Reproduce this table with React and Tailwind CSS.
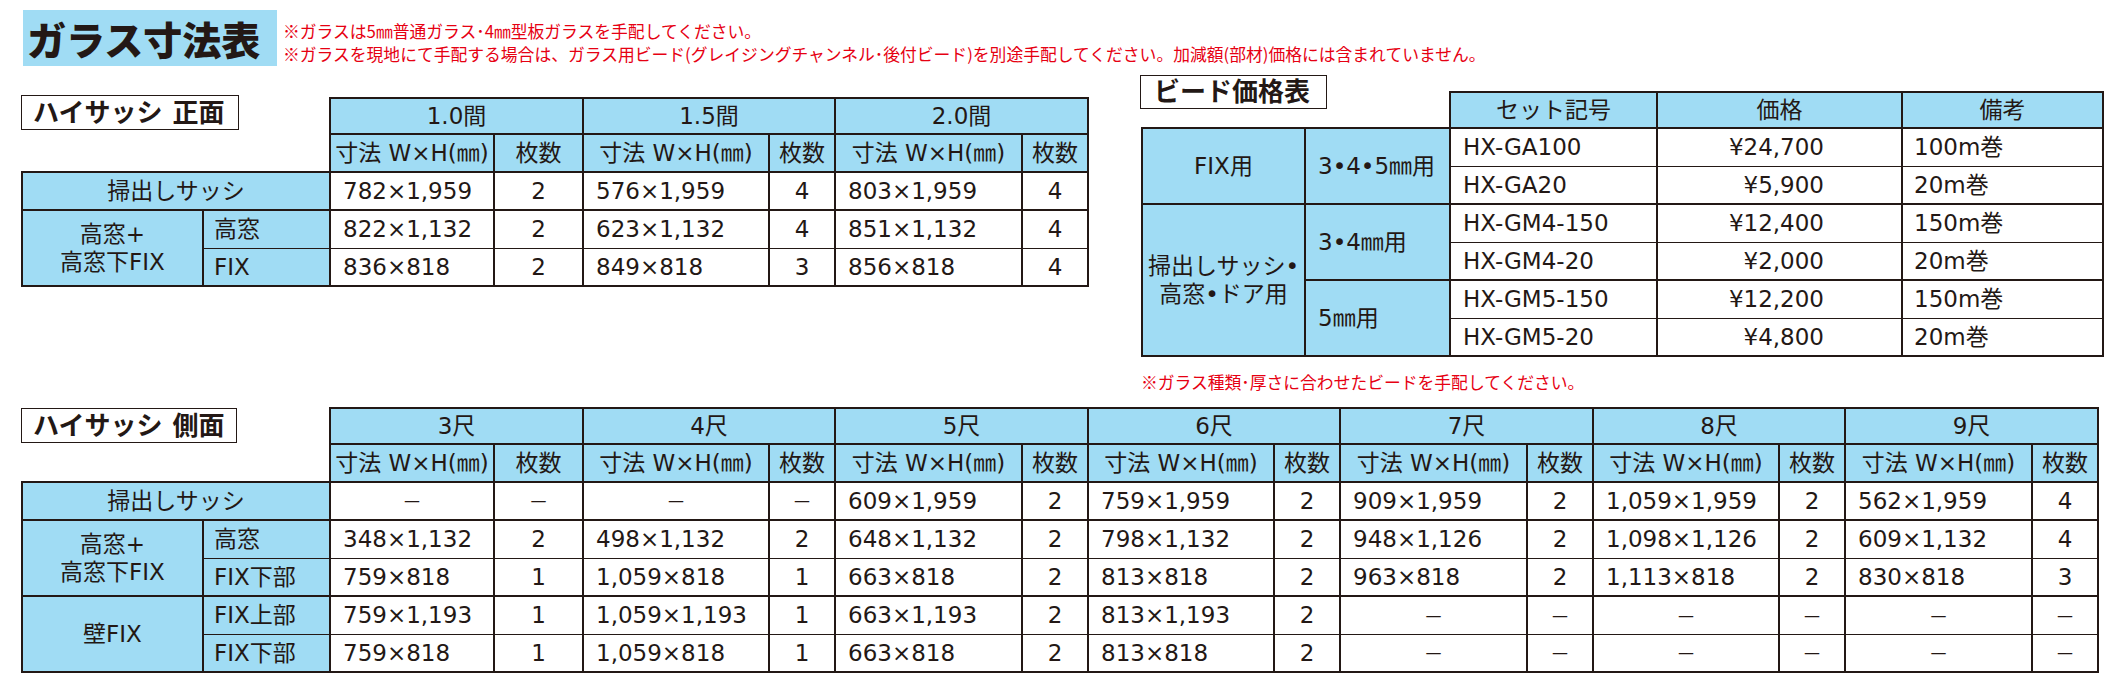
import React from 'react'

const ink = 'border-[#231815]'
const blue = 'bg-[#a0dcf4]'

function Cell({ children, className = '' }) {
  return (
    <div className={`flex items-center border-r-2 ${ink} ${className}`}>
      {children}
    </div>
  )
}

function Label({ children, className = '' }) {
  return (
    <div className={`flex items-center gap-[10px] border ${ink} bg-white text-[26px] font-bold leading-none ${className}`}>
      {children}
    </div>
  )
}

const Dash = () => <span className="text-[16px]">—</span>

// one data row of the size tables: [dim, count] pairs
function DataCells({ pairs, thin }) {
  const b = thin ? 'border-b' : 'border-b-2'
  return pairs.map(([dim, count], i) => (
    <React.Fragment key={i}>
      {dim === '-' ? (
        <Cell className={`${b} justify-center`}><Dash /></Cell>
      ) : (
        <Cell className={`${b} pl-[12px]`}>{dim}</Cell>
      )}
      <Cell className={`${b} justify-center`}>{count === '-' ? <Dash /> : count}</Cell>
    </React.Fragment>
  ))
}

function SizeHeader({ groups }) {
  return (
    <>
      {groups.map((g) => (
        <Cell key={g} className={`col-span-2 border-t-2 border-b-2 justify-center ${blue}`}>{g}</Cell>
      ))}
      {groups.map((g) => (
        <React.Fragment key={g + 'sub'}>
          <Cell className={`border-b-2 justify-center ${blue}`}>寸法 W×H(㎜)</Cell>
          <Cell className={`border-b-2 justify-center ${blue}`}>枚数</Cell>
        </React.Fragment>
      ))}
    </>
  )
}

const front = {
  groups: ['1.0間', '1.5間', '2.0間'],
  rows: [
    [['782×1,959', '2'], ['576×1,959', '4'], ['803×1,959', '4']],
    [['822×1,132', '2'], ['623×1,132', '4'], ['851×1,132', '4']],
    [['836×818', '2'], ['849×818', '3'], ['856×818', '4']],
  ],
}

const side = {
  groups: ['3尺', '4尺', '5尺', '6尺', '7尺', '8尺', '9尺'],
  rows: [
    [['-', '-'], ['-', '-'], ['609×1,959', '2'], ['759×1,959', '2'], ['909×1,959', '2'], ['1,059×1,959', '2'], ['562×1,959', '4']],
    [['348×1,132', '2'], ['498×1,132', '2'], ['648×1,132', '2'], ['798×1,132', '2'], ['948×1,126', '2'], ['1,098×1,126', '2'], ['609×1,132', '4']],
    [['759×818', '1'], ['1,059×818', '1'], ['663×818', '2'], ['813×818', '2'], ['963×818', '2'], ['1,113×818', '2'], ['830×818', '3']],
    [['759×1,193', '1'], ['1,059×1,193', '1'], ['663×1,193', '2'], ['813×1,193', '2'], ['-', '-'], ['-', '-'], ['-', '-']],
    [['759×818', '1'], ['1,059×818', '1'], ['663×818', '2'], ['813×818', '2'], ['-', '-'], ['-', '-'], ['-', '-']],
  ],
}

const beads = [
  ['HX-GA100', '¥24,700', '100m巻'],
  ['HX-GA20', '¥5,900', '20m巻'],
  ['HX-GM4-150', '¥12,400', '150m巻'],
  ['HX-GM4-20', '¥2,000', '20m巻'],
  ['HX-GM5-150', '¥12,200', '150m巻'],
  ['HX-GM5-20', '¥4,800', '20m巻'],
]

function FrontTable() {
  const { groups, rows } = front
  return (
    <div className="grid grid-cols-[183px_127px_164px_89px_186px_66px_187px_66px] grid-rows-[repeat(5,38px)]">
      <div className={`col-span-2 row-span-2 flex items-start border-r-2 border-b-2 ${ink}`}>
        <Label className="-mt-[2px] h-[35px] w-[218px] pl-[11px]">
          <span>ハイサッシ</span><span>正面</span>
        </Label>
      </div>
      <SizeHeader groups={groups} />

      <Cell className={`col-span-2 border-l-2 border-b-2 justify-center ${blue}`}>掃出しサッシ</Cell>
      <DataCells pairs={rows[0]} />

      <Cell className={`row-span-2 border-l-2 border-b-2 justify-center text-center leading-[28px] ${blue}`}>
        高窓+<br />高窓下FIX
      </Cell>
      <Cell className={`border-b pl-[10px] ${blue}`}>高窓</Cell>
      <DataCells pairs={rows[1]} thin />
      <Cell className={`border-b-2 pl-[10px] ${blue}`}>FIX</Cell>
      <DataCells pairs={rows[2]} />
    </div>
  )
}

function SideTable() {
  const { groups, rows } = side
  return (
    <div className="grid grid-cols-[183px_127px_164px_89px_186px_66px_187px_66px_186px_66px_187px_66px_186px_66px_187px_66px] grid-rows-[repeat(7,38px)]">
      <div className={`col-span-2 row-span-2 flex items-start border-r-2 border-b-2 ${ink}`}>
        <Label className="mt-[1px] h-[35px] w-[216px] pl-[11px]">
          <span>ハイサッシ</span><span>側面</span>
        </Label>
      </div>
      <SizeHeader groups={groups} />

      <Cell className={`col-span-2 border-l-2 border-b-2 justify-center ${blue}`}>掃出しサッシ</Cell>
      <DataCells pairs={rows[0]} />

      <Cell className={`row-span-2 border-l-2 border-b-2 justify-center text-center leading-[28px] ${blue}`}>
        高窓+<br />高窓下FIX
      </Cell>
      <Cell className={`border-b pl-[10px] ${blue}`}>高窓</Cell>
      <DataCells pairs={rows[1]} thin />
      <Cell className={`border-b-2 pl-[10px] ${blue}`}>FIX下部</Cell>
      <DataCells pairs={rows[2]} />

      <Cell className={`row-span-2 border-l-2 border-b-2 justify-center ${blue}`}>壁FIX</Cell>
      <Cell className={`border-b pl-[10px] ${blue}`}>FIX上部</Cell>
      <DataCells pairs={rows[3]} thin />
      <Cell className={`border-b-2 pl-[10px] ${blue}`}>FIX下部</Cell>
      <DataCells pairs={rows[4]} />
    </div>
  )
}

function BeadRow({ row, last }) {
  const b = last ? 'border-b-2' : 'border-b'
  const [code, price, note] = row
  return (
    <>
      <Cell className={`${b} pl-[12px]`}>{code}</Cell>
      <Cell className={`${b} justify-end pr-[77px]`}>{price}</Cell>
      <Cell className={`${b} pl-[11px]`}>{note}</Cell>
    </>
  )
}

function BeadTable() {
  return (
    <div className="grid grid-cols-[165px_145px_207px_245px_201px] grid-rows-[repeat(7,38px)]">
      <div className={`col-span-2 flex items-start border-r-2 border-b-2 ${ink}`}>
        <Label className="-ml-[1px] -mt-[16px] h-[34px] w-[187px] pl-[13px]">ビード価格表</Label>
      </div>
      <Cell className={`border-t-2 border-b-2 justify-center ${blue}`}>セット記号</Cell>
      <Cell className={`border-t-2 border-b-2 justify-center ${blue}`}>価格</Cell>
      <Cell className={`border-t-2 border-b-2 justify-center ${blue}`}>備考</Cell>

      <Cell className={`row-span-2 border-l-2 border-b-2 justify-center ${blue}`}>FIX用</Cell>
      <Cell className={`row-span-2 border-b-2 pl-[12px] ${blue}`}>3•4•5㎜用</Cell>
      <BeadRow row={beads[0]} />
      <BeadRow row={beads[1]} last />

      <Cell className={`row-span-4 border-l-2 border-b-2 justify-center text-center leading-[28px] ${blue}`}>
        掃出しサッシ•<br />高窓•ドア用
      </Cell>
      <Cell className={`row-span-2 border-b-2 pl-[12px] ${blue}`}>3•4㎜用</Cell>
      <BeadRow row={beads[2]} />
      <BeadRow row={beads[3]} last />
      <Cell className={`row-span-2 border-b-2 pl-[12px] ${blue}`}>5㎜用</Cell>
      <BeadRow row={beads[4]} />
      <BeadRow row={beads[5]} last />
    </div>
  )
}

export default function App() {
  return (
    <div className="h-[692px] w-[2116px] overflow-hidden bg-white font-['DejaVu_Sans','Noto_Sans_CJK_JP',sans-serif] text-[23px] text-[#231815]">
      {/* title + notes */}
      <div className="flex h-[66px] items-start pt-[10px] font-['Noto_Sans_CJK_JP',sans-serif]">
        <div className={`ml-[23px] flex h-[56px] w-[254px] items-center pl-[4px] text-[39px] font-black leading-none text-[#231815] ${blue}`}>
          ガラス寸法表
        </div>
        <div className="ml-[6px] mt-[10px] text-[16.8px] leading-[23px] text-[#e60012]">
          <p>※ガラスは5㎜普通ガラス･4㎜型板ガラスを手配してください。</p>
          <p>※ガラスを現地にて手配する場合は、ガラス用ビード(グレイジングチャンネル･後付ビード)を別途手配してください。加減額(部材)価格には含まれていません。</p>
        </div>
      </div>

      <div className="flex items-start pl-[21px]">
        <div className="mt-[31px]">
          <FrontTable />
        </div>
        <div className="ml-[52px] mt-[25px]">
          <BeadTable />
          <p className="mt-[14px] font-['Noto_Sans_CJK_JP',sans-serif] text-[16.8px] leading-[22px] text-[#e60012]">
            ※ガラス種類･厚さに合わせたビードを手配してください。
          </p>
        </div>
      </div>

      <div className="mt-[14px] pl-[21px]">
        <SideTable />
      </div>
    </div>
  )
}
